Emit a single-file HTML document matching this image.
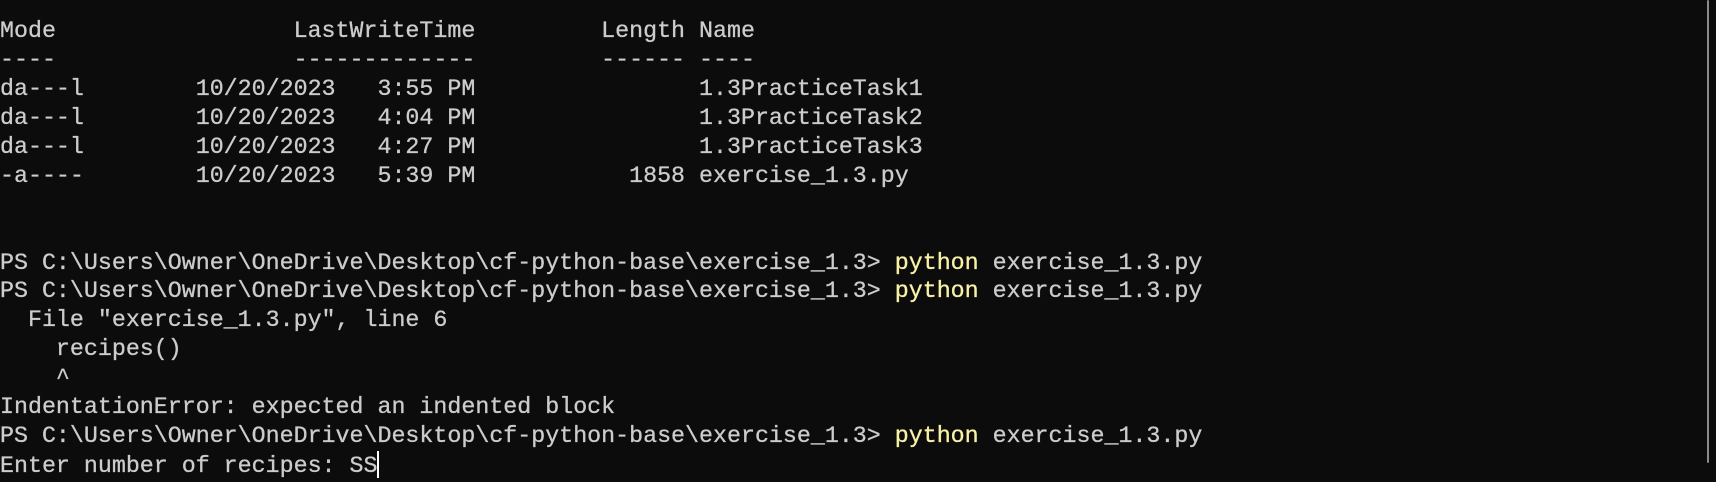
<!DOCTYPE html>
<html><head><meta charset="utf-8"><style>
html,body{margin:0;padding:0;background:#0c0c0c;width:1716px;height:482px;overflow:hidden}
pre{position:absolute;left:0;top:17px;margin:0;font-family:"Liberation Mono","DejaVu Sans Mono",monospace;font-size:23.3px;line-height:28.93px;color:#cccccc;white-space:pre;-webkit-text-stroke:0.3px #cccccc}
.y{color:#f9f1a5;-webkit-text-stroke:0.3px #f9f1a5}
.cur{display:inline-block;width:2px;height:27px;background:#fff;vertical-align:-6px}
.sb{position:absolute;left:1707px;top:0;width:2px;height:463px;background:#8a8a8a;border-radius:1px}
</style></head><body>
<pre>Mode                 LastWriteTime         Length Name
----                 -------------         ------ ----
da---l        10/20/2023   3:55 PM                1.3PracticeTask1
da---l        10/20/2023   4:04 PM                1.3PracticeTask2
da---l        10/20/2023   4:27 PM                1.3PracticeTask3
-a----        10/20/2023   5:39 PM           1858 exercise_1.3.py


PS C:\Users\Owner\OneDrive\Desktop\cf-python-base\exercise_1.3&gt; <span class="y">python</span> exercise_1.3.py
PS C:\Users\Owner\OneDrive\Desktop\cf-python-base\exercise_1.3&gt; <span class="y">python</span> exercise_1.3.py
  File "exercise_1.3.py", line 6
    recipes()
    ^
IndentationError: expected an indented block
PS C:\Users\Owner\OneDrive\Desktop\cf-python-base\exercise_1.3&gt; <span class="y">python</span> exercise_1.3.py
Enter number of recipes: SS<span class="cur"></span></pre>
<div class="sb"></div>
</body></html>
